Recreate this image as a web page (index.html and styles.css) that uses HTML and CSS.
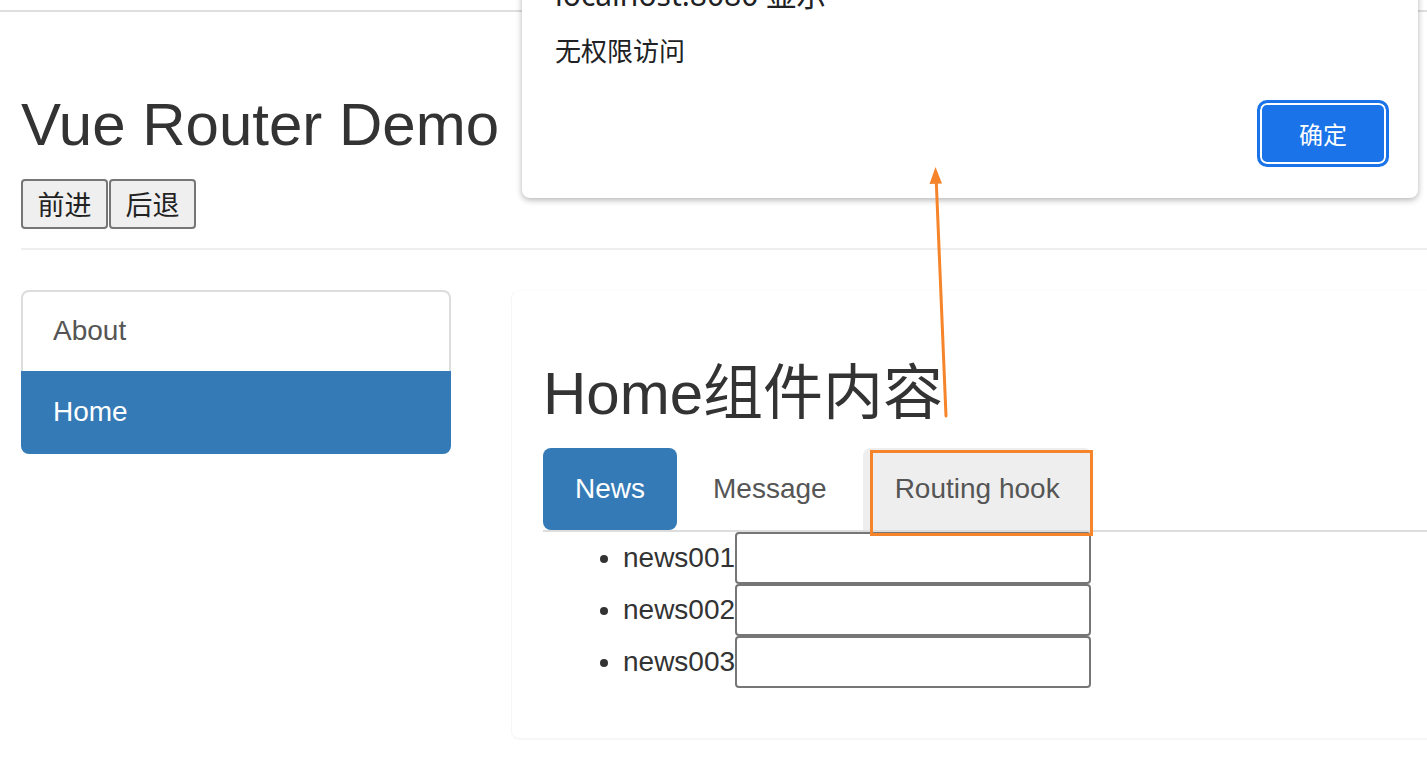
FILE: index.html
```html
<!DOCTYPE html>
<html lang="zh-CN">
<head>
<meta charset="utf-8">
<title>Vue Router Demo</title>
<link rel="stylesheet" href="styles.css">
</head>
<body>
<div class="topbar"></div>
<div class="page">
  <h2 class="title">Vue Router Demo</h2>
  <div class="history">
    <button class="hbtn">前进</button>
    <button class="hbtn">后退</button>
  </div>
  <hr class="divider">
  <div class="row">
    <nav class="list-group">
      <a class="list-item">About</a>
      <a class="list-item active">Home</a>
    </nav>
    <div class="panel">
      <h2 class="panel-title">Home组件内容</h2>
      <ul class="tabs">
        <li class="tab active">News</li>
        <li class="tab">Message</li>
        <li class="tab hover">Routing hook</li>
      </ul>
      <ul class="news">
        <li class="news-item">news001<input class="news-input" type="text"></li>
        <li class="news-item">news002<input class="news-input" type="text"></li>
        <li class="news-item">news003<input class="news-input" type="text"></li>
      </ul>
    </div>
  </div>
</div>

<div class="dialog">
  <div class="dialog-title">localhost:8080 显示</div>
  <div class="dialog-msg">无权限访问</div>
  <div class="dialog-actions">
    <button class="ok">确定</button>
  </div>
</div>

<svg class="annotation" width="1427" height="758" viewBox="0 0 1427 758" xmlns="http://www.w3.org/2000/svg">
  <line x1="946" y1="416" x2="936.2" y2="180" stroke="#f5842b" stroke-width="3" stroke-linecap="round"/>
  <polygon points="935.5,167 929.5,184 942,183.5" fill="#f5842b"/>
  <rect x="871.5" y="451.5" width="220" height="83" fill="none" stroke="#f5842b" stroke-width="3"/>
</svg>
</body>
</html>
```
FILE: styles.css
```css
html, body {
  margin: 0;
  padding: 0;
  background: #fff;
}
body {
  width: 1427px;
  height: 758px;
  overflow: hidden;
  position: relative;
  font-family: "Liberation Sans", "Noto Sans CJK SC", sans-serif;
  color: #333;
  font-size: 28px;
  line-height: 40px;
}
.topbar {
  height: 10px;
  border-bottom: 2px solid #dedede;
}
.page {
  padding-left: 21px;
}
.title {
  margin: 80px 0 21px;
  font-size: 60px;
  line-height: 66px;
  font-weight: normal;
  color: #333;
}
.history {
  display: flex;
  gap: 1px;
}
.hbtn {
  width: 87px;
  height: 50px;
  box-sizing: border-box;
  padding: 0;
  border: 2px solid #767676;
  border-radius: 4px;
  background: #efefef;
  color: #222;
  font-family: "Noto Sans CJK SC", sans-serif;
  font-size: 27px;
  line-height: 46px;
}
.divider {
  margin: 19px 0 40px;
  border: 0;
  border-top: 2px solid #eee;
  height: 0;
}
.row {
  display: flex;
  align-items: flex-start;
  gap: 60px;
}
.list-group {
  width: 430px;
  flex: none;
  display: flex;
  flex-direction: column;
}
.list-item {
  display: block;
  padding: 19px 30px 20px;
  border: 2px solid #ddd;
  border-bottom: 0;
  border-radius: 8px 8px 0 0;
  color: #555;
}
.list-item.active {
  padding: 21px 32px 22px;
  border: 0;
  border-radius: 0 0 8px 8px;
  background: #337ab7;
  color: #fff;
}
.panel {
  flex: none;
  width: 1000px;
  padding: 30px 31px;
  border: 1px solid #f6f6f6;
  border-top-color: #fcfcfc;
  border-radius: 8px;
  box-shadow: 0 1px 1px rgba(0,0,0,0.03);
}
.panel-title {
  margin: 40px 0 21px;
  font-size: 60px;
  line-height: 66px;
  font-weight: normal;
  color: #333;
}
.tabs {
  display: flex;
  list-style: none;
  margin: 0;
  padding: 0;
  border-bottom: 2px solid #ddd;
}
.tab {
  padding: 21px 32px;
  margin-right: 4px;
  border-radius: 8px;
  color: #555;
}
.tab.active {
  background: #337ab7;
  color: #fff;
}
.tab.hover {
  background: #eee;
  border-radius: 8px 8px 0 0;
}
.news {
  margin: 0 0 20px;
  padding-left: 80px;
}
.news-item {
  height: 52px;
  line-height: 52px;
}
.news-input {
  vertical-align: top;
  width: 356px;
  height: 52px;
  box-sizing: border-box;
  margin: 0;
  border: 2px solid #767676;
  border-radius: 4px;
  background: #fff;
}
.dialog {
  position: absolute;
  left: 522px;
  top: -38px;
  width: 896px;
  height: 236px;
  box-sizing: border-box;
  padding: 15px 29px 31px 33px;
  background: #fff;
  border-radius: 8px;
  box-shadow: 0 2px 6px rgba(0,0,0,0.3);
  font-family: "Noto Sans", "Noto Sans CJK SC", sans-serif;
  color: #202124;
  display: flex;
  flex-direction: column;
}
.dialog-title {
  font-size: 30px;
  line-height: 36px;
}
.dialog-msg {
  margin-top: 19px;
  font-family: "Noto Sans CJK SC", sans-serif;
  font-size: 26px;
  line-height: 36px;
}
.dialog-actions {
  margin-top: auto;
  display: flex;
  justify-content: flex-end;
}
.ok {
  width: 132px;
  height: 67px;
  box-sizing: border-box;
  border: 3px solid #1a73e8;
  border-radius: 10px;
  background: #1a73e8;
  box-shadow: inset 0 0 0 2px #fff;
  color: #fff;
  font-family: "Noto Sans CJK SC", sans-serif;
  font-size: 24px;
  padding: 0;
}
.annotation {
  position: absolute;
  left: 0;
  top: 0;
  pointer-events: none;
}
```
